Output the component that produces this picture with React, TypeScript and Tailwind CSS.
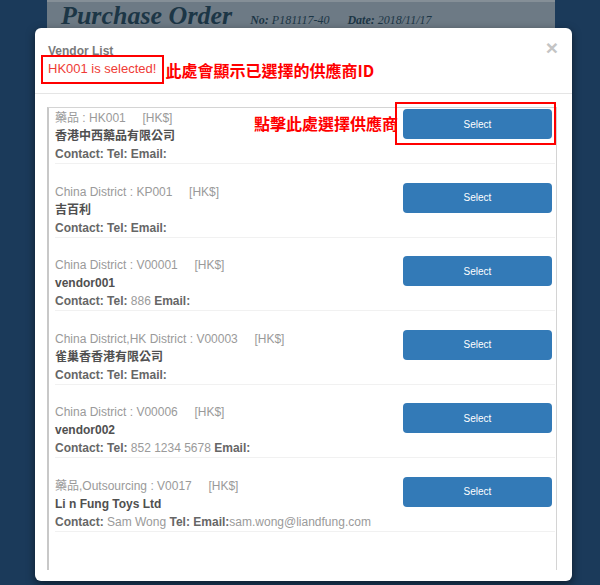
import React from "react";

interface Vendor {
  group: string;
  code: string;
  name: string;
  contact?: string;
  tel?: string;
  email?: string;
}

const vendors: Vendor[] = [
  { group: "藥品", code: "HK001", name: "香港中西藥品有限公司" },
  { group: "China District", code: "KP001", name: "吉百利" },
  { group: "China District", code: "V00001", name: "vendor001", tel: "886" },
  { group: "China District,HK District", code: "V00003", name: "雀巢香香港有限公司" },
  { group: "China District", code: "V00006", name: "vendor002", tel: "852 1234 5678" },
  {
    group: "藥品,Outsourcing",
    code: "V0017",
    name: "Li n Fung Toys Ltd",
    contact: "Sam Wong",
    email: "sam.wong@liandfung.com",
  },
];

function VendorRow({ vendor, first }: { vendor: Vendor; first: boolean }) {
  return (
    <div className="h-[73.6px]">
      <div className="ml-[6px] mr-[1px] h-[56px] flex justify-between border-b border-[#f1f1f1]">
        <div className="pt-[1px] text-[12px] leading-[18px] whitespace-nowrap">
          <div className="text-[#9a9a9a]">
            {vendor.group} : {vendor.code}&nbsp;&nbsp;&nbsp;&nbsp;&nbsp;[HK$]
          </div>
          <div className="font-bold text-[#505050]">{vendor.name}</div>
          <div className="text-[#9a9a9a]">
            <span className="font-bold text-[#666]">Contact:</span>
            {vendor.contact ? ` ${vendor.contact}` : ""}{" "}
            <span className="font-bold text-[#666]">Tel:</span>
            {vendor.tel ? ` ${vendor.tel}` : ""}{" "}
            <span className="font-bold text-[#666]">Email:</span>
            {vendor.email ?? ""}
          </div>
        </div>

        <div className="relative mt-[1px] mr-[3px] h-[30px]">
          <button className="w-[149px] h-[30px] rounded-[4px] bg-[#337ab7] text-white text-[10px]">
            Select
          </button>
          {first && (
            <>
              {/* annotation */}
              <div className="absolute -left-[8px] -top-[7px] w-[161px] h-[43px] border-2 border-[#ff0000]" />
              <div className="absolute right-[calc(100%+5px)] top-[6px] whitespace-nowrap text-[16px] leading-[20px] font-bold text-[#ff0000]">
                點擊此處選擇供應商
              </div>
            </>
          )}
        </div>
      </div>
    </div>
  );
}

export default function App() {
  return (
    <div
      className="relative w-[600px] h-[585px] overflow-hidden bg-[#1b3a5a]"
      style={{ fontFamily: '"Liberation Sans", "Noto Sans CJK TC", Arial, sans-serif' }}
    >
      {/* page behind the overlay */}
      <div className="ml-[47px] w-[508px] h-[30px] bg-[#6d7a85] border-t-2 border-[#858f97]">
        <div
          className="pl-[14px] flex items-baseline gap-[18px] text-[#1c3646] italic"
          style={{ fontFamily: '"Liberation Serif", "Times New Roman", serif' }}
        >
          <span className="text-[26px] leading-[28px] font-bold">Purchase Order</span>
          <span className="text-[12px]">
            <b>No:</b> P181117-40
          </span>
          <span className="text-[12px]">
            <b>Date:</b> 2018/11/17
          </span>
        </div>
      </div>

      {/* modal */}
      <div className="absolute left-[35px] top-[28px] w-[537px] h-[553px] bg-white rounded-[6px] shadow-[0_3px_9px_rgba(0,0,0,0.5)]">
        <div className="relative px-[13px] pt-[15px] pb-[9px] border-b border-[#e5e5e5]">
          <div className="text-[12px] leading-[16px] font-bold text-[#7a7a7a]">Vendor List</div>
          <div className="flex items-center -mt-[4px] -ml-[7px]">
            <div className="border-2 border-[#ff0000] pl-[5px] pr-[6px] pt-[2px] pb-[3px] text-[13px] leading-[20px] text-[#ef3b36]">
              HK001 is selected!
            </div>
            <div
              className="ml-[1px] text-[16px] leading-[20px] font-bold text-[#ff0000] whitespace-nowrap"
              style={{ fontFamily: '"Noto Sans CJK TC", "Liberation Sans", sans-serif' }}
            >
              此處會顯示已選擇的供應商ID
            </div>
          </div>
          <button className="absolute right-[14px] top-[9px] text-[21px] leading-none font-bold text-[#c4c4c4]">
            ×
          </button>
        </div>

        <div className="pt-[13px] pl-[12px] pr-[15px]">
          <div className="h-[463px] border-l-2 border-t border-r border-[#d4d4d4] border-l-[#c8c8c8]">
            {vendors.map((v, i) => (
              <VendorRow key={v.code} vendor={v} first={i === 0} />
            ))}
          </div>
        </div>
      </div>
    </div>
  );
}
